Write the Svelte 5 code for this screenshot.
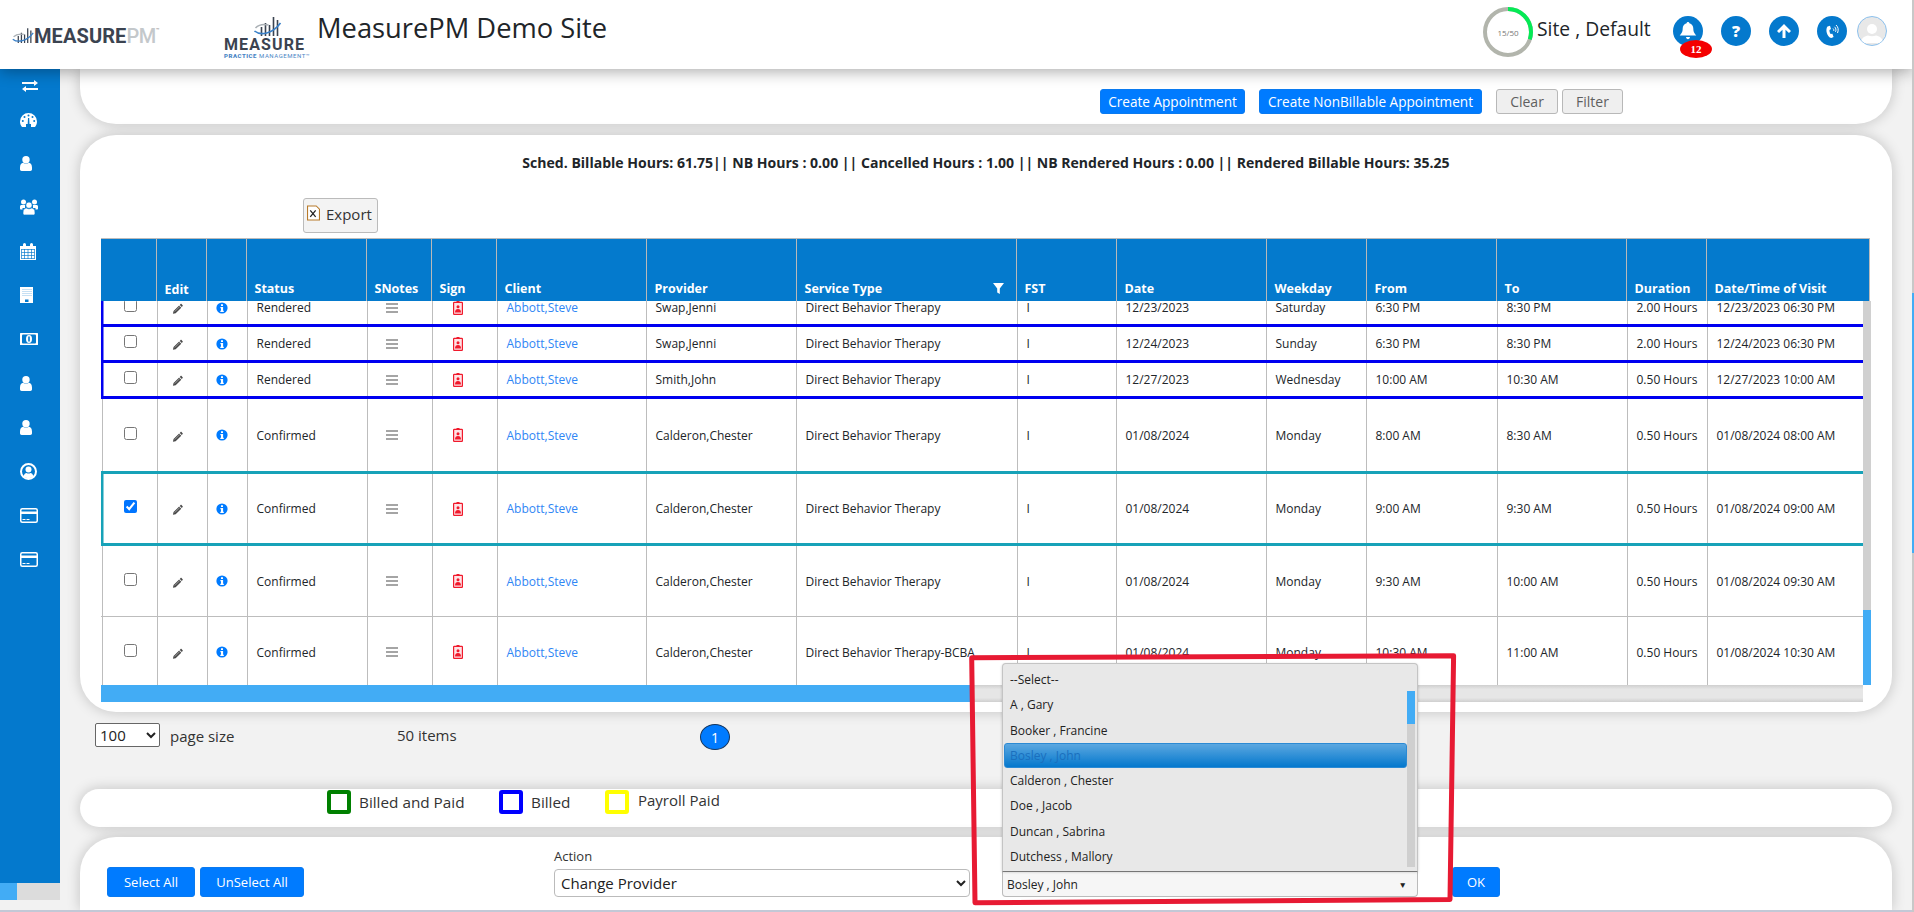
<script>
  const rows = [
    { kind: 'billed first', st: 'Rendered', pr: 'Swap,Jenni', sv: 'Direct Behavior Therapy', d: '12/23/2023', w: 'Saturday', f: '6:30 PM', t: '8:30 PM', du: '2.00 Hours', v: '12/23/2023 06:30 PM' },
    { kind: 'billed', st: 'Rendered', pr: 'Swap,Jenni', sv: 'Direct Behavior Therapy', d: '12/24/2023', w: 'Sunday', f: '6:30 PM', t: '8:30 PM', du: '2.00 Hours', v: '12/24/2023 06:30 PM' },
    { kind: 'billed', st: 'Rendered', pr: 'Smith,John', sv: 'Direct Behavior Therapy', d: '12/27/2023', w: 'Wednesday', f: '10:00 AM', t: '10:30 AM', du: '0.50 Hours', v: '12/27/2023 10:00 AM' },
    { kind: 'plain tall4', st: 'Confirmed', pr: 'Calderon,Chester', sv: 'Direct Behavior Therapy', d: '01/08/2024', w: 'Monday', f: '8:00 AM', t: '8:30 AM', du: '0.50 Hours', v: '01/08/2024 08:00 AM' },
    { kind: 'picked', checked: true, st: 'Confirmed', pr: 'Calderon,Chester', sv: 'Direct Behavior Therapy', d: '01/08/2024', w: 'Monday', f: '9:00 AM', t: '9:30 AM', du: '0.50 Hours', v: '01/08/2024 09:00 AM' },
    { kind: 'plain tall6', st: 'Confirmed', pr: 'Calderon,Chester', sv: 'Direct Behavior Therapy', d: '01/08/2024', w: 'Monday', f: '9:30 AM', t: '10:00 AM', du: '0.50 Hours', v: '01/08/2024 09:30 AM' },
    { kind: 'plain tall7', st: 'Confirmed', pr: 'Calderon,Chester', sv: 'Direct Behavior Therapy-BCBA', d: '01/08/2024', w: 'Monday', f: '10:30 AM', t: '11:00 AM', du: '0.50 Hours', v: '01/08/2024 10:30 AM' }
  ];
  const heads = ['', 'Edit', '', 'Status', 'SNotes', 'Sign', 'Client', 'Provider', 'Service Type', 'FST', 'Date', 'Weekday', 'From', 'To', 'Duration', 'Date/Time of Visit'];
  const options = ['--Select--', 'A , Gary', 'Booker , Francine', 'Bosley , John', 'Calderon , Chester', 'Doe , Jacob', 'Duncan , Sabrina', 'Dutchess , Mallory'];
  const navIcons = ['transfer', 'gauge', 'user', 'users', 'calendar', 'building', 'money', 'user', 'user', 'circle', 'card', 'card'];
</script>

{#snippet bars(w, h)}
  <svg class="bars" width={w} height={h} viewBox="0 0 28 20">
    <path d="M8 10v9M12 6v13M16 8v11M20 0v19M24 3v16" stroke="#3b4350" stroke-width="1.6" fill="none" />
    <path d="M1 14c6 5 18 3 26-8" stroke="#3a80c8" stroke-width="1.6" fill="none" />
    <path d="M2 11c4-4 8-4 13-3" stroke="#aab0b5" stroke-width="1.6" fill="none" />
  </svg>
{/snippet}

{#snippet nav(name)}
  {#if name === 'transfer'}
    <svg class="ni transfer" width="16" height="12" viewBox="0 0 16 12"><path fill="#fff" d="M0 2h12V0l4 3-4 3V4H0zM16 8H4V6L0 9l4 3v-2h12z" /></svg>
  {:else if name === 'gauge'}
    <svg class="ni" width="17" height="14" viewBox="0 0 17 14"><path fill="#fff" d="M8.5 0A8.5 8.5 0 0 0 0 8.5c0 2 .7 3.9 2 5.5h13c1.300-1.600 2-3.500 2-5.500A8.500 8.500 0 0 0 8.500 0z" /><g fill="#0479cd"><circle cx="8.500" cy="2.500" r="1" /><circle cx="4.500" cy="4" r="1" /><circle cx="12.500" cy="4" r="1" /><circle cx="2.800" cy="8" r="1" /><circle cx="14.200" cy="8" r="1" /><path d="M8 5h1.200l.3 6H11v3H6v-3h1.700z" /></g></svg>
  {:else if name === 'user'}
    <svg class="ni" width="12" height="15" viewBox="0 0 12 15"><circle cx="6" cy="3.700" r="3.700" fill="#fff" /><path fill="#fff" d="M0 11.500C0 8.500 1.500 7 3 6.800c1.800 1.300 4.200 1.300 6 0 1.500.2 3 1.700 3 4.700v1.800c0 1-.7 1.700-1.700 1.700H1.700C.7 15 0 14.300 0 13.300z" /></svg>
  {:else if name === 'users'}
    <svg class="ni" width="18" height="16" viewBox="0 0 18 16"><g fill="#fff"><circle cx="3.500" cy="3" r="2.500" /><circle cx="14.500" cy="3" r="2.500" /><path d="M0 7.500C0 6.300 1 6 2 6h3v3H2.500v1.500H1C.4 10.500 0 10 0 9.500zM18 7.500c0-1.200-1-1.500-2-1.500h-3v3h2.500v1.500H17c.6 0 1-.5 1-1z" /><path stroke="#0479cd" stroke-width=".7" d="M9 3a3.200 3.200 0 1 1 0 6.400A3.200 3.200 0 0 1 9 3zM3 13c0-2.500 1.500-4 3.500-4 1.500 1 3.500 1 5 0 2 0 3.500 1.500 3.500 4v1.500c0 .8-.7 1.500-1.500 1.500h-9C3.700 16 3 15.300 3 14.500z" /></g></svg>
  {:else if name === 'calendar'}
    <svg class="ni" width="16" height="17" viewBox="0 0 16 17"><path fill="#fff" d="M0 3h3V1.500a1.500 1.500 0 0 1 3 0V3h4V1.500a1.500 1.500 0 0 1 3 0V3h3v14H0z" /><path stroke="#0479cd" fill="none" d="M1.500 6.500h13M1.500 9.500h13M1.500 12.500h13M1.500 15.500h13M4.500 6v10M8 6v10M11.500 6v10M1.500 6v10M14.500 6v10" stroke-width=".9" opacity=".75" /></svg>
  {:else if name === 'building'}
    <svg class="ni" width="13" height="16" viewBox="0 0 13 16"><rect width="13" height="16" fill="#fff" /><path stroke="#8ec1e8" stroke-dasharray="1 1" d="M3 2v8M5 2v8M7 2v8M9 2v8M11 2v8" stroke-width="1" /><rect x="5" y="12.500" width="3.500" height="2.500" fill="#0479cd" /></svg>
  {:else if name === 'money'}
    <svg class="ni" width="18" height="12" viewBox="0 0 18 12"><rect width="18" height="12" rx=".5" fill="#fff" /><rect x="2" y="1.500" width="14" height="9" rx="1" fill="#0479cd" /><ellipse cx="9" cy="6" rx="3" ry="4" fill="#fff" /><rect x="8.200" y="3.500" width="1.600" height="5" fill="#0479cd" /></svg>
  {:else if name === 'circle'}
    <svg class="ni" width="17" height="17" viewBox="0 0 17 17"><circle cx="8.500" cy="8.500" r="7.500" fill="#0479cd" stroke="#fff" stroke-width="2" /><circle cx="8.500" cy="6.500" r="3" fill="#fff" /><path fill="#fff" d="M3.500 13.500c.5-2.500 2-3.500 3-3.500 1.200.7 2.800.7 4 0 1 0 2.500 1 3 3.500-2.800 2.300-7.200 2.300-10 0z" /></svg>
  {:else}
    <svg class="ni" width="18" height="15" viewBox="0 0 18 15"><rect x=".75" y=".75" width="16.500" height="13.500" rx="1.500" fill="none" stroke="#fff" stroke-width="1.500" /><rect x="1" y="3.500" width="16" height="2.500" fill="#fff" /><path stroke="#fff" d="M2.500 11.500h3M6.500 11.500h3" /></svg>
  {/if}
{/snippet}

{#snippet pencil()}
  <svg class="pencil" width="11" height="12" viewBox="0 0 12 12"><path fill="#4a4a4a" d="M1 11.300l.7-3L7.800 2.200l2.300 2.300L4 10.600zM8.500 1.500l.9-.9c.3-.3.700-.3 1 0l1.200 1.200c.3.3.3.700 0 1l-.9.900z" /><path d="M3 8.800L8.500 3.300" stroke="#ddd" stroke-width=".6" /></svg>
{/snippet}

{#snippet info()}
  <svg width="12" height="12" viewBox="0 0 12 12"><circle cx="6" cy="6" r="5.600" fill="#007bff" /><path fill="#fff" d="M5 2.200h2v1.800H5zM4.400 5h2.700v3.800h.7V10H4.300V8.800H5V6.200h-.6z" /></svg>
{/snippet}

{#snippet lines()}
  <svg width="12" height="10" viewBox="0 0 12 10"><path d="M0 1h12M0 5h12M0 9h12" stroke="#888" stroke-width="1.600" /></svg>
{/snippet}

{#snippet sign()}
  <svg width="10" height="14" viewBox="0 0 10 14"><rect x=".6" y="1.300" width="8.800" height="12" rx=".6" fill="#ffe3e6" stroke="#f01a2c" stroke-width="1.200" /><rect x="3.500" y="0" width="3" height="2" fill="#f01a2c" /><circle cx="5" cy="5.700" r="1.500" fill="#f01a2c" /><path fill="#f01a2c" d="M2 11.500c0-2.500 1.200-3.500 3-3.500s3 1 3 3.500z" /></svg>
{/snippet}

<div class="page">
  <header class="top">
    <div class="logo-one">
      {@render bars(22, 16)}
      <span class="lm">MEASURE</span><span class="lp">PM</span><sup class="tm">™</sup>
    </div>
    <div class="logo-two">
      <div class="l2-icon">{@render bars(29, 20)}</div>
      <div class="l2-word">MEASURE</div>
      <div class="l2-sub"><b>PRACTICE</b> MANAGEMENT™</div>
    </div>
    <h1 class="title">MeasurePM Demo Site</h1>
    <div class="ring">
      <svg width="50" height="50" viewBox="0 0 50 50">
        <circle cx="25" cy="25" r="23" fill="none" stroke="#b2b5ac" stroke-width="4" />
        <circle cx="25" cy="25" r="23" fill="none" stroke="#05ea55" stroke-width="4" stroke-dasharray="43.400 101" transform="rotate(-90 25 25)" />
      </svg>
      <span>15/50</span>
    </div>
    <div class="who">Site , Default</div>
    <div class="round bell">
      <svg width="18" height="18" viewBox="0 0 18 18"><path fill="#fff" d="M9 0c.8 0 1.400.6 1.400 1.300 2.500.6 3.900 2.700 3.900 5.200 0 4.300 2 5.500 3 7H.7c1-1.500 3-2.700 3-7 0-2.500 1.400-4.600 3.900-5.200C7.600.6 8.200 0 9 0zM7 15h4c0 1.200-.9 2.200-2 2.200S7 16.200 7 15z" /></svg>
      <span class="badge">12</span>
    </div>
    <div class="round q">?</div>
    <div class="round">
      <svg width="16" height="16" viewBox="0 0 16 16"><path fill="#fff" d="M8 1l7 7-2 2-3.500-3.300V15h-3V6.700L3 10 1 8z" /></svg>
    </div>
    <div class="round">
      <svg width="18" height="18" viewBox="0 0 18 18"><path fill="#fff" d="M4.500 4.500L7 3.700l1 3.300-1.500 1c-.2 1.300.3 3 1.200 4l1.700-.3 1.200 3.200-2.300 1.200C4 15 2 7.500 4.500 4.500z" /><path fill="none" stroke="#fff" stroke-width="1" d="M10 6.500c.8.600 1 1.500.7 2.500M11.500 4.800c1.500 1.200 1.900 3.200 1 5M13 3c2.300 2 2.800 5 1.500 8" /></svg>
    </div>
    <div class="avatar">
      <svg width="24" height="24" viewBox="0 0 24 24"><circle cx="12" cy="8" r="5" fill="#fff" /><path fill="#fff" d="M1 22c0-5 4-7 7-7.500 2.500 1 5.500 1 8 0 3 .5 7 2.500 7 7.500z" /></svg>
    </div>
  </header>

  <div class="body">
    <aside class="side">
      <nav class="navlist">
        {#each navIcons as n}
          <div class="navitem">{@render nav(n)}</div>
        {/each}
      </nav>
      <div class="sidebar-scroll"><i></i></div>
    </aside>

    <main class="main">
      <section class="panel p1">
        <button class="blue b-create">Create Appointment</button>
        <button class="blue b-non">Create NonBillable Appointment</button>
        <button class="plainbtn">Clear</button>
        <button class="plainbtn">Filter</button>
      </section>

      <section class="panel p2">
        <div class="sched">Sched. Billable Hours: 61.75|| NB Hours : 0.00 || Cancelled Hours : 1.00 || NB Rendered Hours : 0.00 || Rendered Billable Hours: 35.25</div>
        <button class="export">
          <svg width="13" height="16" viewBox="0 0 12 14"><path d="M.5.500h8l3 3v10H.5z" fill="#fff" stroke="#b87a2a" /><path d="M3 4.500l5 6M8 4.500l-5 6" stroke="#222" stroke-width="1.200" /></svg>
          <span>Export</span>
        </button>

        <div class="thead">
          {#each heads as h, i}
            <div class="th" class:svc={i === 8} class:edit={i === 1}>
              <span>{h}</span>
              {#if i === 8}
                <svg width="11" height="11" viewBox="0 0 11 11"><path fill="#fff" d="M0 0h11L6.800 5.500V11L4.200 9.500v-4z" /></svg>
              {/if}
            </div>
          {/each}
        </div>

        <div class="tbody-wrap">
          <div class="tbody">
            {#each rows as r}
              <div class="row {r.kind}">
                <div class="td c-check"><input type="checkbox" checked={r.checked} /></div>
                <div class="td c-edit">{@render pencil()}</div>
                <div class="td c-info">{@render info()}</div>
                <div class="td">{r.st}</div>
                <div class="td c-lines">{@render lines()}</div>
                <div class="td c-sign">{@render sign()}</div>
                <div class="td link">Abbott,Steve</div>
                <div class="td">{r.pr}</div>
                <div class="td">{r.sv}</div>
                <div class="td">I</div>
                <div class="td">{r.d}</div>
                <div class="td">{r.w}</div>
                <div class="td">{r.f}</div>
                <div class="td">{r.t}</div>
                <div class="td">{r.du}</div>
                <div class="td last">{r.v}</div>
              </div>
            {/each}
          </div>
          <div class="vscroll"><i></i></div>
        </div>
        <div class="hscroll"><i></i></div>
      </section>

      <div class="pager">
        <select class="psize"><option>100</option></select>
        <span class="ps">page size</span>
        <span class="items">50 items</span>
        <span class="pagenum">1</span>
      </div>

      <section class="panel p3">
        <span class="box green"></span><span class="lg lg1">Billed and Paid</span>
        <span class="box blueb"></span><span class="lg lg2">Billed</span>
        <span class="box yellow"></span><span class="lg lg3">Payroll Paid</span>
      </section>

      <section class="panel p4">
        <button class="blue act">Select All</button>
        <button class="blue act un">UnSelect All</button>
        <div class="actionf">
          <div class="alabel">Action</div>
          <select class="aselect"><option>Change Provider</option></select>
        </div>
        <div class="combo">
          <div class="pop">
            <ul>
              {#each options as o, i}
                <li class:sel={i === 3}>{o}</li>
              {/each}
            </ul>
            <div class="popscroll"><i></i></div>
          </div>
          <div class="cinput"><span>Bosley , John</span><em>▼</em></div>
        </div>
        <button class="blue ok">OK</button>
      </section>
    </main>
  </div>
  <div class="footline"></div>
  <div class="pagescroll"><i></i></div>

  <svg class="annot" width="1914" height="912" viewBox="0 0 1914 912">
    <path d="M971.700 657.800L1453.600 655.800L1450 899.500L975 902.800Z" fill="none" stroke="#e71a33" stroke-width="5" stroke-linejoin="round" />
  </svg>
</div>

<style>
  :global(body) { margin: 0; background: #f2f2f2; }
  .page {
    position: relative;
    width: 1914px;
    height: 912px;
    overflow: hidden;
    display: flex;
    flex-direction: column;
    font-family: "Open Sans", "Noto Sans", sans-serif;
    font-size: 12px;
    color: #212529;
    background: #f2f2f2;
  }
  .top {
    position: relative;
    z-index: 5;
    flex: 0 0 69px;
    width: 1912px;
    background: #fff;
    box-shadow: 0 3px 14px rgba(0, 0, 0, .32);
    display: flex;
    align-items: center;
  }
  .logo-one {
    display: flex;
    align-items: center;
    margin-left: 12px;
    width: 212px;
    font-family: Roboto, sans-serif;
    font-size: 20px;
    line-height: 1;
    margin-top: 3px;
  }
  .lm { margin-left: 0; font-weight: 700; color: #3b4350; letter-spacing: .1px; }
  .lp { font-weight: 500; color: #c4c8cb; letter-spacing: -.4px; }
  .tm { font-size: 6px; color: #888; align-self: flex-start; margin-top: 1px; }
  .logo-two { width: 93px; align-self: flex-start; padding-top: 17px; box-sizing: border-box; height: 69px; }
  .l2-icon { margin-left: 29px; height: 21px; }
  .l2-word { font-family: Roboto, sans-serif; font-weight: 700; font-size: 16px; line-height: 14px; letter-spacing: 1.100px; color: #3b4350; }
  .l2-sub { font-family: Roboto, sans-serif; font-size: 6px; line-height: 7px; letter-spacing: .55px; color: #4a86c5; white-space: nowrap; }
  .l2-sub b { font-weight: 900; }
  .title { margin: -14px 0 0; font-size: 27.300px; font-weight: 400; color: #212529; line-height: 36px; width: 1166px; }
  .ring { position: relative; width: 50px; height: 50px; margin-top: -5px; }
  .ring svg { display: block; }
  .ring span { position: absolute; inset: 0; display: flex; align-items: center; justify-content: center; font-size: 8px; color: #777; padding-top: 1px; }
  .who { font-size: 19.300px; line-height: 26px; margin: -11px 0 0 4px; width: 136px; color: #212529; }
  .round {
    position: relative;
    width: 30px; height: 30px;
    border-radius: 50%;
    background: #0479cd;
    margin-right: 18px;
    margin-top: -7px;
    display: flex; align-items: center; justify-content: center;
    color: #fff;
  }
  .q { font-weight: 800; font-size: 16px; }
  .badge {
    position: absolute;
    left: 7px; top: 24px;
    width: 32px; height: 18px;
    border-radius: 50%;
    background: #f40000;
    color: #fff;
    font: 700 11px/18px "Liberation Serif", serif;
    text-align: center;
  }
  .avatar {
    width: 28px; height: 28px;
    border: 1px solid #8cc1ee;
    border-radius: 50%;
    background: #e8e8e8;
    margin: -7px 0 0 -8px;
    display: flex; align-items: flex-end; justify-content: center;
    overflow: hidden;
  }
  .body { flex: 1; display: flex; min-height: 0; }
  .side { flex: 0 0 60px; display: flex; flex-direction: column; margin-bottom: 10px; background: #0479cd; position: relative; z-index: 2; }
  .navlist { flex: 1; display: flex; flex-direction: column; padding-left: 20px; }
  .navitem { height: 44px; display: flex; align-items: center; flex: none; }
  .navitem:nth-child(1), .navitem:nth-child(2) { height: 34px; }
  .navitem:nth-child(3) { margin-top: 4px; }
  .transfer { margin-left: 2px; }
  .ni { display: block; }
  .sidebar-scroll { height: 17px; background: #dcdcdc; }
  .sidebar-scroll i { display: block; width: 17px; height: 100%; background: #42acf5; }

  .main { flex: 1; display: flex; flex-direction: column; padding: 0 22px 0 20px; min-width: 0; }
  .panel { background: #fff; box-shadow: 0 0 14px rgba(0, 0, 0, .2); }
  .p1 {
    flex: 0 0 55px;
    box-sizing: border-box;
    border-radius: 0 0 36px 36px;
    display: flex;
    align-items: flex-start;
    padding: 20px 0 0 1020px;
  }
  button { font-family: inherit; cursor: pointer; }
  .blue { background: #007bff; color: #fff; border: 1px solid #0a7af0; border-radius: 3px; padding: 0; }
  .b-create, .b-non { height: 25px; font-size: 13.600px; }
  .b-create { width: 145px; margin-right: 14px; }
  .b-non { width: 223px; margin-right: 14px; }
  .plainbtn { height: 25px; background: #efefef; color: #5f5f5f; border: 1px solid #b8b8b8; border-radius: 3px; font-size: 14px; padding: 0; width: 62px; margin-right: 4px; }
  .plainbtn:last-child { width: 61px; }

  .p2 {
    flex: 0 0 577px;
    margin-top: 11px;
    border-radius: 36px;
    box-sizing: border-box;
    padding: 18px 21px 0;
    display: flex;
    flex-direction: column;
    align-items: flex-start;
  }
  .sched { align-self: stretch; text-align: center; font-weight: 700; font-size: 14.050px; line-height: 20px; color: #212529; }
  .export {
    margin: 25px 0 5px 202px;
    width: 75px; height: 35px;
    background: #f3f3f3;
    border: 1px solid #bbb;
    border-radius: 3px;
    display: flex; align-items: center;
    padding: 0 0 3px 3px;
    gap: 6px;
    font-size: 15px;
    color: #333;
  }
  .export svg { margin-top: -3px; }
  .thead {
    display: grid;
    grid-template-columns: 56px 50px 40px 120px 65px 65px 150px 150px 220px 100px 150px 100px 130px 130px 80px 163px;
    height: 63px;
    width: 1769px;
    background: #047acd;
    box-sizing: border-box;
    border-top: 1px solid #bbb;
    border-right: 1px solid #bbb;
  }
  .th {
    border-right: 1px solid #b9b9b9;
    color: #fff;
    font-weight: 700;
    font-size: 12.500px;
    line-height: 17px;
    padding: 0 7.500px 4px;
    display: flex;
    align-items: flex-end;
    white-space: nowrap;
    min-width: 0;
  }
  .th:last-child { border-right: 0; }
  .th.edit { padding-bottom: 3px; }
  .svc { justify-content: space-between; padding-right: 12px; }
  .svc svg { margin-bottom: 3px; }
  .tbody-wrap { display: flex; height: 384px; width: 1770px; overflow: hidden; }
  .tbody { width: 1762px; margin-top: -13px; flex: none; }
  .vscroll { width: 8px; background: #d0d0d0; display: flex; align-items: flex-end; flex: none; }
  .vscroll i { display: block; width: 100%; height: 75px; background: #42acf5; }
  .row {
    display: grid;
    grid-template-columns: 57px 50px 40px 120px 65px 65px 149px 150px 221px 99px 150px 100px 131px 130px 80px 155px;
    box-sizing: border-box;
  }
  .td {
    border-right: 1px solid #bdbdbd;
    padding-left: 8.500px;
    display: flex;
    align-items: center;
    white-space: nowrap;
    min-width: 0;
    color: #212529;
  }
  .td.last { border-right: 0; }
  .link { color: #2f86f5; }
  .c-check { justify-content: center; padding-left: 3px; }
  .c-check input { width: 13px; height: 13px; margin: -4px 0 0; }
  .c-edit { padding-left: 14px; }
  .pencil { margin-top: 3px; }
  .c-info { padding-left: 8px; }
  .c-lines { padding-left: 18px; }
  .c-sign { padding-left: 20px; }
  .billed { border-bottom: 3px solid #0000f0; box-shadow: inset 2.500px 0 0 #0000f0; height: 36px; }
  .billed.first { border-top: 3px solid #0000f0; height: 39px; }
  .plain { background: linear-gradient(#bdbdbd, #bdbdbd) 1px 0 / 1px 100% no-repeat; }
  .tall4 { height: 72px; }
  .picked { height: 75px; border-top: 3px solid #17a2b8; border-bottom: 3px solid #17a2b8; box-shadow: inset 2.500px 0 0 #17a2b8; }
  .tall6 { height: 71px; border-bottom: 1px solid #bdbdbd; }
  .tall7 { height: 70px; }
  .hscroll { width: 1762px; height: 17px; background: linear-gradient(#cfcfcf, #e6e6e6 25%, #e6e6e6 75%, #cfcfcf); }
  .hscroll i { display: block; height: 100%; width: 869px; background: #42acf5; }

  .pager { flex: 0 0 77px; box-sizing: border-box; padding: 11px 0 0 15px; display: flex; align-items: flex-start; font-size: 15px; color: #333; }
  .psize { width: 65px; height: 24px; font-family: inherit; font-size: 15px; background: #fff; border: 1px solid #666; border-radius: 2px; color: #222; padding: 0; }
  .ps { margin: 3px 0 0 10px; width: 227px; }
  .items { margin-top: 2px; width: 303px; }
  .pagenum { width: 28px; height: 24px; border-radius: 50%; background: #007bff; color: #fff; border: 1px solid #14365f; display: flex; align-items: center; justify-content: center; font-size: 14px; margin-top: 1px; }

  .p3 { flex: 0 0 38px; border-radius: 19px; display: flex; align-items: flex-start; padding: 1px 0 0 247px; box-sizing: border-box; font-size: 15.300px; color: #333; }
  .box { width: 24px; height: 24px; border: 4px solid; border-radius: 3px; box-sizing: border-box; flex: none; }
  .green { border-color: #008000; }
  .blueb { border-color: #0000ff; }
  .yellow { border-color: #ffff00; }
  .lg { line-height: 24px; margin-left: 8px; white-space: nowrap; }
  .lg1 { width: 140px; }
  .lg2 { width: 74px; }
  .lg3 { margin-left: 9px; margin-top: -2px; font-size: 15px; }

  .p4 { flex: 0 0 73px; margin-top: 10px; border-radius: 36px 36px 0 0; display: flex; align-items: flex-end; padding: 0 0 13px 27px; box-sizing: border-box; }
  .act { height: 30px; width: 88px; font-size: 13px; margin-right: 5px; }
  .act.un { width: 104px; margin-right: 250px; }
  .actionf { width: 448px; }
  .alabel { font-size: 13px; line-height: 18px; color: #333; margin-bottom: 4px; }
  .aselect { width: 416px; height: 28px; font-family: inherit; font-size: 15px; background: #fff; border: 1px solid #bbb; border-radius: 4px; color: #222; padding: 0 2px; display: block; }
  .combo { position: relative; width: 416px; }
  .cinput {
    height: 27px; box-sizing: border-box;
    border: 1px solid #bbb; border-top: 2px solid #888; border-radius: 0 0 4px 4px;
    background: #f6f6f6;
    display: flex; align-items: center; justify-content: space-between;
    padding: 0 10px 0 4px;
    color: #222;
  }
  .cinput em { font-style: normal; font-size: 8.500px; color: #222; }
  .pop {
    position: absolute;
    left: 0; bottom: 26px;
    width: 416px; height: 208px;
    box-sizing: border-box;
    background: #e8e8e8;
    border: 1px solid #c4c4c4;
    border-bottom: 0;
    border-radius: 4px 4px 0 0;
    box-shadow: 0 1px 3px rgba(0, 0, 0, .2);
  }
  .pop ul { list-style: none; margin: 0; padding: 3px 0 0; width: 404px; }
  .pop li { height: 25.300px; line-height: 25px; padding-left: 6px; margin-left: 1px; color: #222; white-space: nowrap; border-radius: 3px; box-sizing: border-box; }
  .pop li.sel { background: linear-gradient(#5ba7e0, #0478cd); color: #1a6fbe; border: 1px solid #2b8ad4; padding-left: 5px; line-height: 23px; }
  .popscroll { position: absolute; left: 404px; top: 27px; width: 8px; height: 176px; background: #cfcfcf; }
  .popscroll i { display: block; height: 33px; background: #42acf5; }
  .ok { width: 48px; height: 30px; margin-left: 34px; font-size: 13px; }

  .footline { flex: 0 0 2px; background: #c3c8d6; position: relative; z-index: 3; }
  .pagescroll { position: absolute; right: 0; top: 0; width: 2px; height: 912px; background: #c8c8c8; z-index: 6; }
  .pagescroll i { display: block; margin-top: 293px; height: 260px; background: #42acf5; }
  .annot { position: absolute; left: 0; top: 0; z-index: 7; pointer-events: none; }
</style>
